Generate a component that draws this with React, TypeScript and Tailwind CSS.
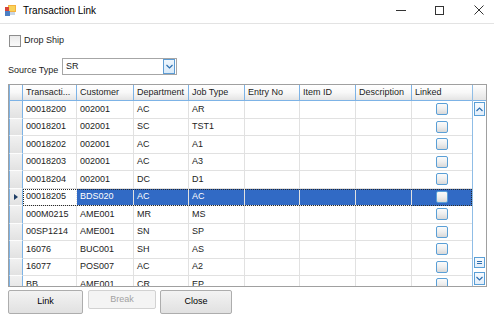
import React from "react";

// Transaction Link dialog — WinForms-style grid picker

const columns = [
  { label: "Transacti...", cls: "w-[54px]" },
  { label: "Customer", cls: "w-[57px]" },
  { label: "Department", cls: "w-[55px]" },
  { label: "Job Type", cls: "w-[56px]" },
  { label: "Entry No", cls: "w-[55px]" },
  { label: "Item ID", cls: "w-[56px]" },
  { label: "Description", cls: "w-[56px]" },
];

const rows = [
  ["00018200", "002001", "AC", "AR"],
  ["00018201", "002001", "SC", "TST1"],
  ["00018202", "002001", "AC", "A1"],
  ["00018203", "002001", "AC", "A3"],
  ["00018204", "002001", "DC", "D1"],
  ["00018205", "BDS020", "AC", "AC"],
  ["000M0215", "AME001", "MR", "MS"],
  ["00SP1214", "AME001", "SN", "SP"],
  ["16076", "BUC001", "SH", "AS"],
  ["16077", "POS007", "AC", "A2"],
  ["BB", "AME001", "CR", "EP"],
];

const SELECTED = 5;

function AppIcon() {
  return (
    <svg width="11" height="11" viewBox="0 0 11 11">
      <rect x="3" y="0" width="8" height="7" fill="#f4b13e" />
      <rect x="4" y="1" width="6" height="5" fill="#f8d25a" />
      <rect x="0" y="2" width="4" height="4" fill="#d8433a" />
      <rect x="0" y="6" width="5" height="5" fill="#4b7fc4" />
      <rect x="5" y="7" width="5" height="3" fill="#c9d6e6" />
    </svg>
  );
}

function LinkedBox() {
  return (
    <div className="w-[12px] h-[12px] rounded-[2px] border border-[#5a9fd6] bg-linear-to-b from-[#fbfbfb] via-[#eeeeee] to-[#d8d8d8]" />
  );
}

function Chevron({ up }: { up?: boolean }) {
  return (
    <svg width="7" height="5" viewBox="0 0 7 5">
      <path
        d={up ? "M0.5 4 L3.5 1 L6.5 4" : "M0.5 1 L3.5 4 L6.5 1"}
        fill="none"
        stroke="#2d6fb0"
        strokeWidth="1.2"
      />
    </svg>
  );
}

export default function App() {
  return (
    <div className="w-[494px] h-[317px] bg-white overflow-hidden flex flex-col text-[9px] text-[#1c1c1c] font-['Liberation_Sans',Arial,sans-serif]">
      {/* Title bar */}
      <div className="h-[24px] pb-[3px] border-b border-[#e3e3e3] flex items-center pl-[5px]">
        <AppIcon />
        <span className="ml-[7px] text-[10px] text-black">Transaction Link</span>
        <div className="ml-auto flex items-center pr-[10px]">
          <div className="w-[10px] h-px bg-[#333]" />
          <div className="ml-[29px] w-[9px] h-[9px] border border-[#333]" />
          <svg className="ml-[30px]" width="10" height="10" viewBox="0 0 10 10">
            <path d="M0.5 0.5 L9.5 9.5 M9.5 0.5 L0.5 9.5" stroke="#333" strokeWidth="1" />
          </svg>
        </div>
      </div>

      <div className="px-[8px] flex flex-col">
        {/* Drop Ship */}
        <div className="mt-[11px] h-[12px] flex items-center">
          <div className="ml-[1px] w-[12px] h-[12px] border border-[#8d8d8d] bg-linear-to-b from-[#eaeaea] to-[#fafafa]" />
          <span className="ml-[3px]">Drop Ship</span>
        </div>

        {/* Source Type */}
        <div className="mt-[11px] h-[17px] flex items-start">
          <span className="w-[54px] mt-[7px] leading-[11px]">Source Type</span>
          <div className="w-[115px] h-[17px] border border-[#a6a6a6] bg-white flex items-center pl-[3px] pr-[1px]">
            <span className="flex-1">SR</span>
            <div className="w-[12px] h-[15px] border border-[#5e9cd3] bg-linear-to-b from-[#eef6fd] to-[#d9eaf9] flex items-center justify-center">
              <Chevron />
            </div>
          </div>
        </div>

        {/* Grid */}
        <div className="mt-[9px] w-[479px] h-[203px] border border-[#a0a0a0] flex overflow-hidden">
          <div className="w-[463px] flex flex-col overflow-hidden">
            {/* Header */}
            <div className="h-[16px] shrink-0 flex bg-linear-to-b from-[#ffffff] via-[#f8f8f8] to-[#e4e4e4] border-b border-[#7db3e6]">
              <div className="w-[14px] border-l border-r border-[#7db3e6]" />
              {columns.map((c) => (
                <div key={c.label} className={`${c.cls} border-r border-[#7db3e6] pl-[3px] flex items-center whitespace-nowrap overflow-hidden`}>
                  {c.label}
                </div>
              ))}
              <div className="w-[60px] pl-[3px] flex items-center">Linked</div>
            </div>

            {/* Body */}
            {rows.map((r, i) => {
              const sel = i === SELECTED;
              return (
                <div key={i} className="h-[17.5px] shrink-0 flex">
                  <div className="w-[14px] border-l border-r border-[#7db3e6] border-b border-b-[#fdfdfd] bg-linear-to-b from-[#f1f1f1] to-[#e2e2e2] flex items-center pl-[4px]">
                    {sel && (
                      <svg width="4" height="6" viewBox="0 0 4 6">
                        <path d="M0 0 L4 3 L0 6 Z" fill="#1f3e66" />
                      </svg>
                    )}
                  </div>
                  <div
                    className={`flex flex-1 ${
                      sel ? "bg-[#316ac5] text-white outline-1 outline-dotted outline-[#2a2a2a] -outline-offset-1" : ""
                    }`}
                  >
                    {columns.map((c, j) => (
                      <div
                        key={c.label}
                        className={`${c.cls} border-r border-b border-[#e1e1e1] pl-[3px] flex items-center whitespace-nowrap overflow-hidden ${
                          sel && j === 0 ? "bg-white text-[#1c1c1c] border-[#9a9a9a] border-dotted" : ""
                        } ${sel && j > 0 ? "border-[#4b7fce]" : ""}`}
                      >
                        {r[j] ?? ""}
                      </div>
                    ))}
                    <div className={`w-[60px] border-b flex items-center justify-center ${sel ? "border-[#4b7fce]" : "border-[#e1e1e1]"}`}>
                      <LinkedBox />
                    </div>
                  </div>
                </div>
              );
            })}
          </div>

          {/* Vertical scrollbar */}
          <div className="w-[14px] flex flex-col border-l border-[#8fbde6] bg-white">
            <div className="h-[16px] shrink-0 bg-linear-to-b from-[#ffffff] to-[#e4e4e4] border-b border-[#7db3e6]" />
            <div className="mt-[1px] h-[14px] mx-[1px] border border-[#5a9fd6] bg-linear-to-b from-[#f7fbff] to-[#e3eefa] flex items-center justify-center">
              <Chevron up />
            </div>
            <div className="flex-1" />
            <div className="h-[11px] mx-[1px] border border-[#5a9fd6] bg-linear-to-b from-[#f7fbff] to-[#e3eefa] flex flex-col items-center justify-center gap-[1px]">
              <div className="w-[5px] h-px bg-[#2d6fb0]" />
              <div className="w-[5px] h-px bg-[#2d6fb0]" />
            </div>
            <div className="mt-[4px] mb-[1px] h-[13px] mx-[1px] border border-[#5a9fd6] bg-linear-to-b from-[#f7fbff] to-[#e3eefa] flex items-center justify-center">
              <Chevron />
            </div>
          </div>
        </div>

        {/* Buttons */}
        <div className="mt-[3px] flex items-start">
          <button className="w-[75px] h-[24px] border border-[#adadad] rounded-[2px] bg-linear-to-b from-[#f3f3f3] to-[#e1e1e1] text-[9px] text-black">
            Link
          </button>
          <button disabled className="ml-[5px] w-[68px] h-[19px] border border-[#d2d2d2] rounded-[2px] bg-[#f4f4f4] text-[9px] text-[#a2a2a2]">
            Break
          </button>
          <button className="ml-[4px] w-[72px] h-[24px] border border-[#adadad] rounded-[2px] bg-linear-to-b from-[#f3f3f3] to-[#e1e1e1] text-[9px] text-black">
            Close
          </button>
        </div>
      </div>
    </div>
  );
}
